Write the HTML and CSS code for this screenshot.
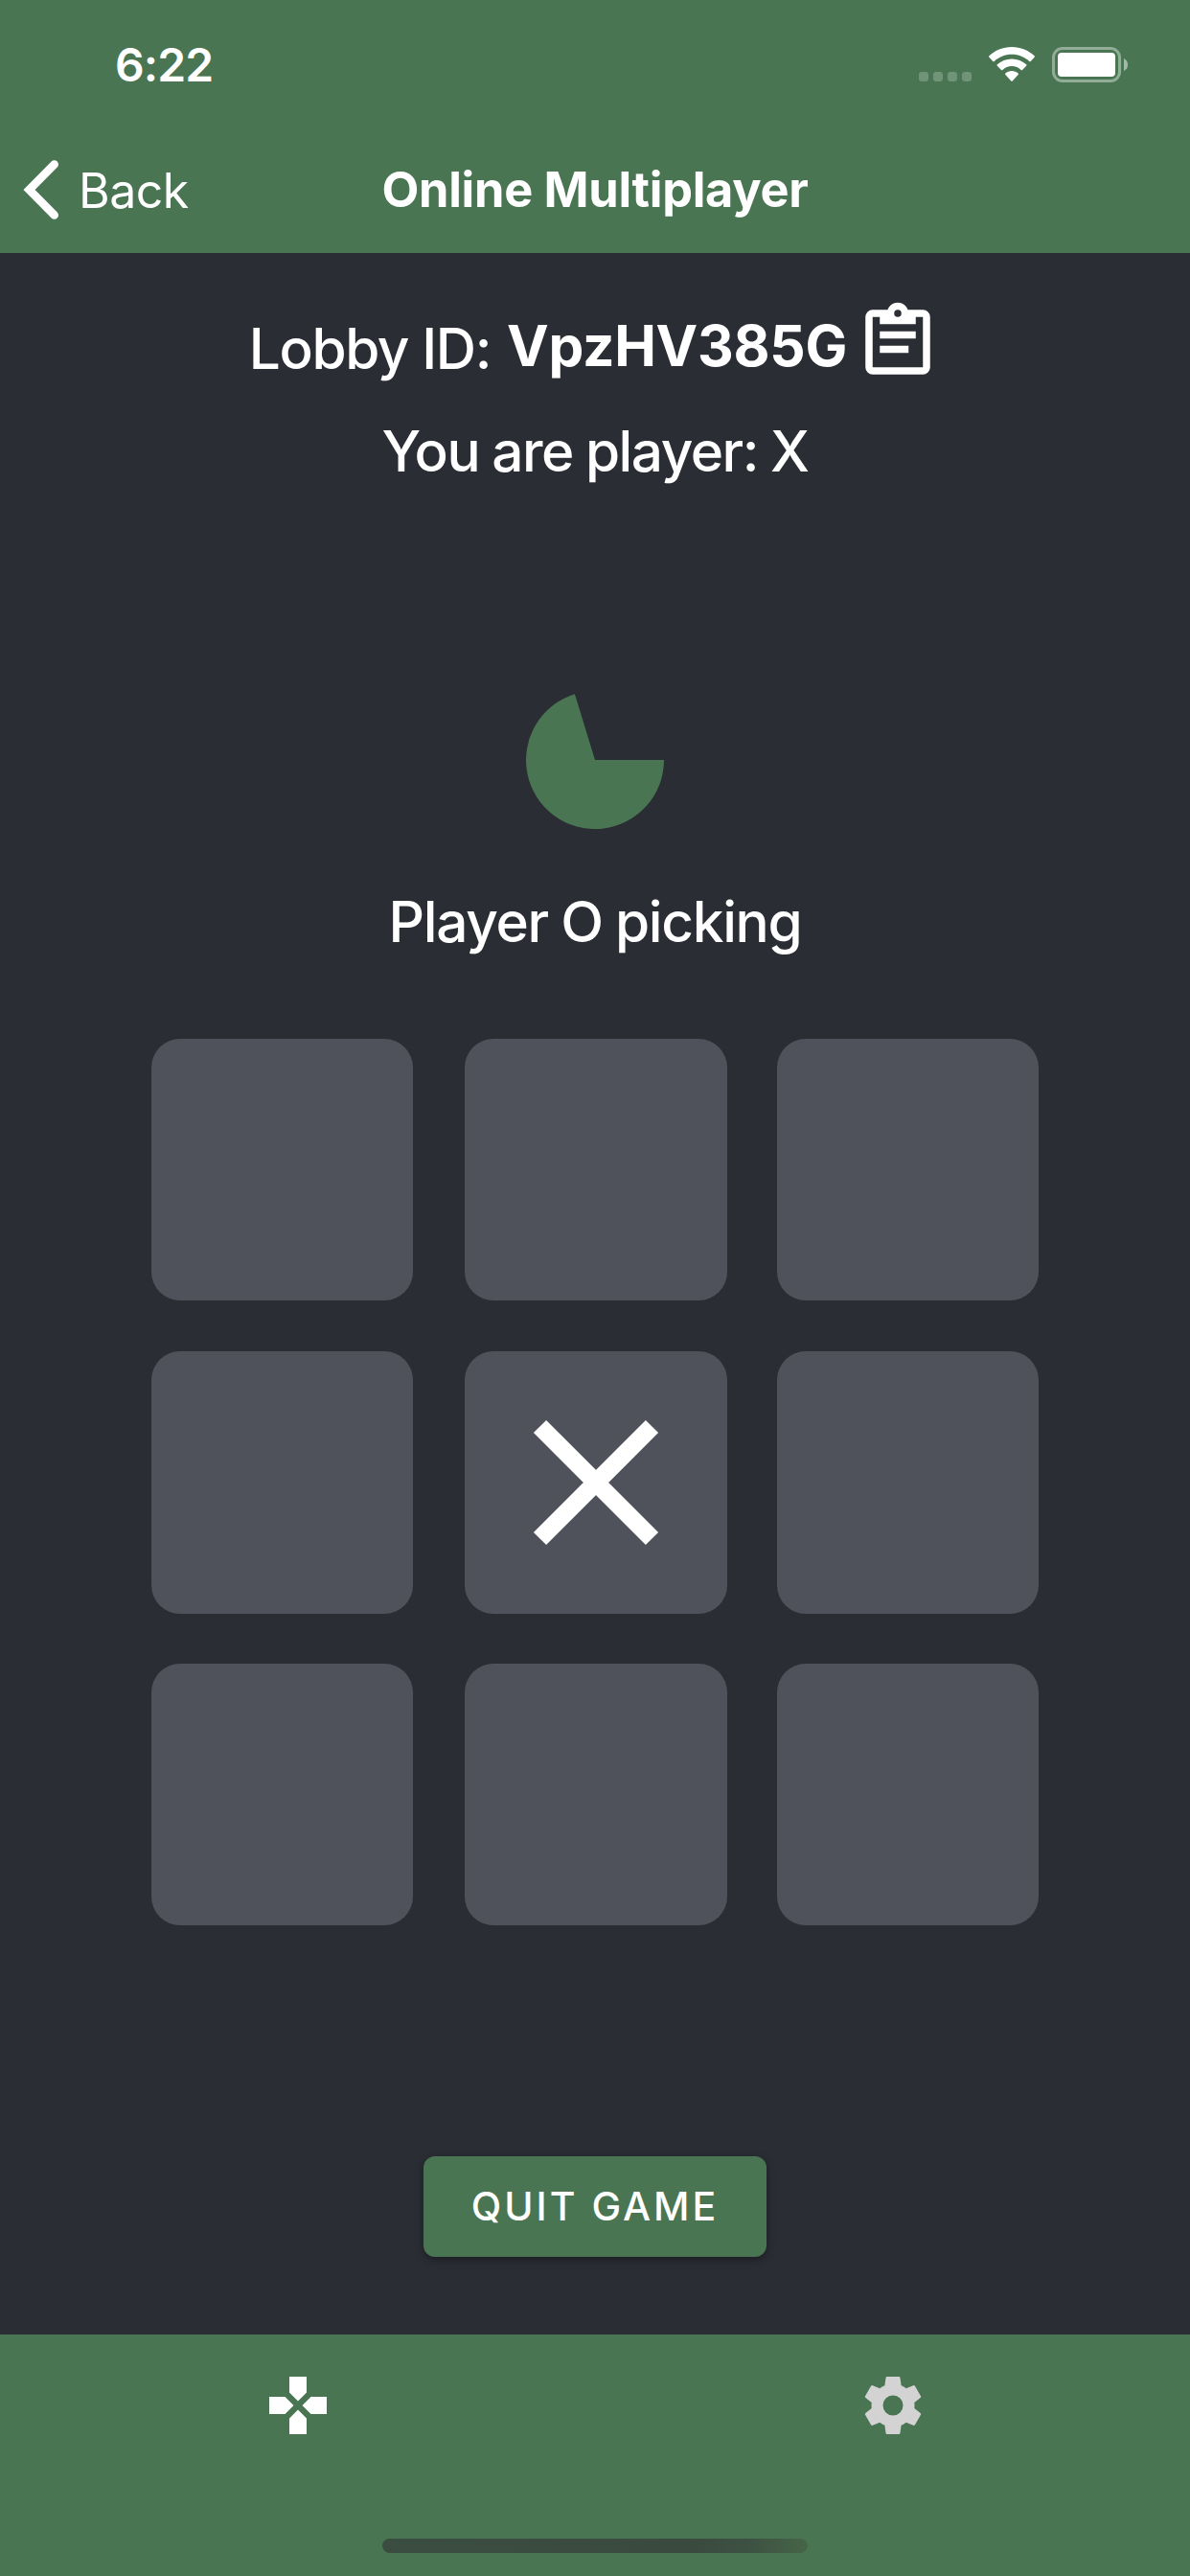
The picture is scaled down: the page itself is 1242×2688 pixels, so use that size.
FILE: index.html
```html
<!DOCTYPE html>
<html lang="en">
<head>
<meta charset="utf-8">
<title>Online Multiplayer</title>
<link rel="stylesheet" href="styles.css">
</head>
<body>
<div class="app">
  <header class="header">
    <div class="status">
      <span class="time">6:22</span>
      <div class="status-icons">
        <div class="signal"><i></i><i></i><i></i><i></i></div>
        <svg class="wifi" width="48" height="36" viewBox="0 0 48 36" fill="#fff">
          <path d="M24 0C33.2 0 41.600 3.500 47.600 9.300Q48.200 10 47.600 10.700L43.700 14.900Q43 15.500 42.300 14.900C37.500 10.400 31 7.700 24 7.700S10.500 10.400 5.700 14.900Q5 15.500 4.300 14.900L.4 10.700Q-.2 10 .4 9.300C6.400 3.500 14.800 0 24 0Z"/>
          <path d="M24 12.400C29.900 12.400 35.200 14.700 39.200 18.300Q39.900 19 39.200 19.700L35 24Q34.300 24.600 33.600 24C31 21.600 27.700 20.100 24 20.100S17 21.600 14.400 24Q13.700 24.600 13 24L8.800 19.700Q8.100 19 8.800 18.300C12.800 14.700 18.100 12.400 24 12.400Z"/>
          <path d="M24 25C26.600 25 28.900 26 30.600 27.500Q31.200 28.200 30.600 28.900L24.700 35.500Q24 36.200 23.300 35.500L17.400 28.900Q16.800 28.200 17.400 27.500C19.100 26 21.400 25 24 25Z"/>
        </svg>
        <svg class="battery" width="80" height="37" viewBox="0 0 80 37">
          <rect x="1.500" y="1.500" width="69" height="34" rx="9.500" fill="none" stroke="#fff" stroke-opacity=".4" stroke-width="3"/>
          <rect x="6" y="6" width="60" height="25" rx="4" fill="#fff"/>
          <path d="M75 12Q79 14 79 18.500T75 25Z" fill="#fff" fill-opacity=".5"/>
        </svg>
      </div>
    </div>
    <nav class="nav">
      <a class="back">
        <svg width="38" height="64" viewBox="0 0 38 64" fill="none" stroke="#fff" stroke-width="8.600" stroke-linecap="round" stroke-linejoin="miter"><path d="M32.700 5.500L6.500 32L32.700 58.500"/></svg>
        <span>Back</span>
      </a>
      <h1 class="title">Online Multiplayer</h1>
    </nav>
  </header>

  <main class="game">
    <div class="lobby">
      <span class="lobby-label">Lobby ID:</span>
      <strong class="lobby-id">VpzHV385G</strong>
      <svg class="copy" width="90" height="90" viewBox="0 0 24 24" fill="#fff" fill-rule="evenodd"><path d="M19 3H14.820C14.400 1.840 13.300 1 12 1S9.600 1.840 9.180 3H5A2 2 0 0 0 3 5V19A2 2 0 0 0 5 21H19A2 2 0 0 0 21 19V5A2 2 0 0 0 19 3ZM12 3A1 1 0 0 1 12 5A1 1 0 0 1 12 3ZM7 7H17V5H19V19H5V5H7ZM7 9H17V11H7ZM7 13H15V15H7Z"/></svg>
    </div>
    <p class="player">You are player: X</p>
    <svg class="timer" width="144" height="144" viewBox="0 0 144 144"><path d="M72 72H144A72 72 0 1 1 50.900 3.200Z" fill="#497552"/></svg>
    <p class="turn">Player O picking</p>
    <div class="board">
      <div class="cell"></div><div class="cell mid"></div><div class="cell"></div>
      <div class="cell tall"></div>
      <div class="cell mid tall"><svg width="132" height="132" viewBox="0 0 132 132" stroke="#fff" stroke-width="18.600"><path d="M7.500 7.500L124.500 124.500M124.500 7.500L7.500 124.500"/></svg></div>
      <div class="cell tall"></div>
      <div class="cell"></div><div class="cell mid"></div><div class="cell"></div>
    </div>
    <button class="quit">QUIT GAME</button>
  </main>

  <footer class="footer">
    <div class="tabs">
      <a class="tab"><svg width="72" height="72" viewBox="0 0 24 24" fill="#fff"><path d="M15 7.500V2H9V7.500L12 10.500ZM7.500 9H2V15H7.500L10.500 12ZM9 16.500V22H15V16.500L12 13.500ZM16.500 9L13.500 12L16.500 15H22V9Z"/></svg></a>
      <a class="tab"><svg width="72" height="72" viewBox="0 0 24 24" fill="#d3d3d3"><path d="M12 15.500A3.500 3.500 0 0 1 8.500 12A3.500 3.500 0 0 1 12 8.500A3.500 3.500 0 0 1 15.500 12A3.500 3.500 0 0 1 12 15.500M19.430 12.970C19.470 12.650 19.500 12.330 19.500 12C19.500 11.670 19.470 11.340 19.430 11L21.540 9.370C21.730 9.220 21.780 8.950 21.660 8.730L19.660 5.270C19.540 5.050 19.270 4.960 19.050 5.050L16.560 6.050C16.040 5.660 15.500 5.320 14.870 5.070L14.500 2.420C14.460 2.180 14.250 2 14 2H10C9.750 2 9.540 2.180 9.500 2.420L9.130 5.070C8.500 5.320 7.960 5.660 7.440 6.050L4.950 5.050C4.730 4.960 4.460 5.050 4.340 5.270L2.340 8.730C2.210 8.950 2.270 9.220 2.460 9.370L4.570 11C4.530 11.340 4.500 11.670 4.500 12C4.500 12.330 4.530 12.650 4.570 12.970L2.460 14.630C2.270 14.780 2.210 15.050 2.340 15.270L4.340 18.730C4.460 18.950 4.730 19.030 4.950 18.950L7.440 17.940C7.960 18.340 8.500 18.680 9.130 18.930L9.500 21.580C9.540 21.820 9.750 22 10 22H14C14.250 22 14.460 21.820 14.500 21.580L14.870 18.930C15.500 18.670 16.040 18.340 16.560 17.940L19.050 18.950C19.270 19.030 19.540 18.950 19.660 18.730L21.660 15.270C21.780 15.050 21.730 14.780 21.540 14.630Z"/></svg></a>
    </div>
    <div class="home"></div>
  </footer>
</div>
</body>
</html>
```
FILE: styles.css
```css
* { box-sizing: border-box; margin: 0; padding: 0; }
body { font-family: Inter, "Liberation Sans", sans-serif; color: #fff; background: #2b2d35; }
svg { display: block; flex: none; }
.app { width: 1242px; height: 2688px; display: flex; flex-direction: column; background: #2b2d35; overflow: hidden; }

.header { height: 264px; background: #497552; flex: none; }
.status { height: 132px; display: flex; justify-content: space-between; padding: 3px 64px 0 119px; }
.time { font-size: 48px; line-height: 129px; font-weight: 600; letter-spacing: -0.9px; padding-left: 1px; }
.status-icons { display: flex; padding-top: 46px; }
.signal { display: flex; gap: 5px; margin: 26px 18px 0 0; }
.signal i { width: 10px; height: 10px; border-radius: 3px; background: rgba(255,255,255,.22); }
.wifi { margin-right: 18px; }

.nav { height: 132px; display: grid; grid-template-columns: 1fr auto 1fr; align-items: center; }
.back { display: flex; align-items: center; gap: 20px; padding-left: 24px; font-size: 50px; letter-spacing: -0.5px; line-height: 64px; }
.back span { padding-top: 2px; }
.title { font-size: 50.500px; line-height: 64px; font-weight: 680; letter-spacing: -0.3px; }

.game { flex: 1; display: flex; flex-direction: column; align-items: center; padding-top: 48px; }
.lobby { display: flex; align-items: center; height: 90px; white-space: nowrap; }
.lobby-label { font-size: 58.500px; line-height: 70px; padding-top: 14px; margin-right: 17px; letter-spacing: -1.4px; font-weight: 450; }
.lobby-id { font-size: 58.500px; line-height: 70px; padding-top: 7px; margin-right: 8px; font-weight: 700; letter-spacing: -0.250px; }
.player, .turn { font-size: 58.500px; line-height: 70px; letter-spacing: -1.5px; word-spacing: -1px; font-weight: 450; white-space: nowrap; }
.player { margin-top: 34px; }
.timer { margin-top: 215px; }
.turn { margin-top: 62px; letter-spacing: -1.3px; }

.board { margin-top: 87px; display: grid; grid-template-columns: 327px 326px 273px; grid-template-rows: 326px 326px 273px; }
.cell { width: 273px; height: 273px; border-radius: 30px; background: #50525b; display: flex; align-items: center; justify-content: center; }
.cell.mid { width: 274px; }
.cell.tall { height: 274px; }

.quit { margin-top: 241px; width: 358px; height: 105px; border: 0; border-radius: 12px; background: #497552; color: #fff; font: 450 41px/105px Inter, "Liberation Sans", sans-serif; letter-spacing: 3px; box-shadow: 0 3px 8px rgba(0,0,0,.35); white-space: nowrap; }

.footer { height: 252px; flex: none; background: #497552; display: flex; flex-direction: column; align-items: center; }
.tabs { width: 100%; display: grid; grid-template-columns: 1fr 1fr; padding-top: 38px; height: 213px; }
.tab { display: flex; justify-content: center; align-items: flex-start; }
.home { width: 444px; height: 15px; border-radius: 8px; background: linear-gradient(90deg, #3b4c40 0%, #3a4a3e 72%, #3d5142 86%, #466548 100%); }
```
